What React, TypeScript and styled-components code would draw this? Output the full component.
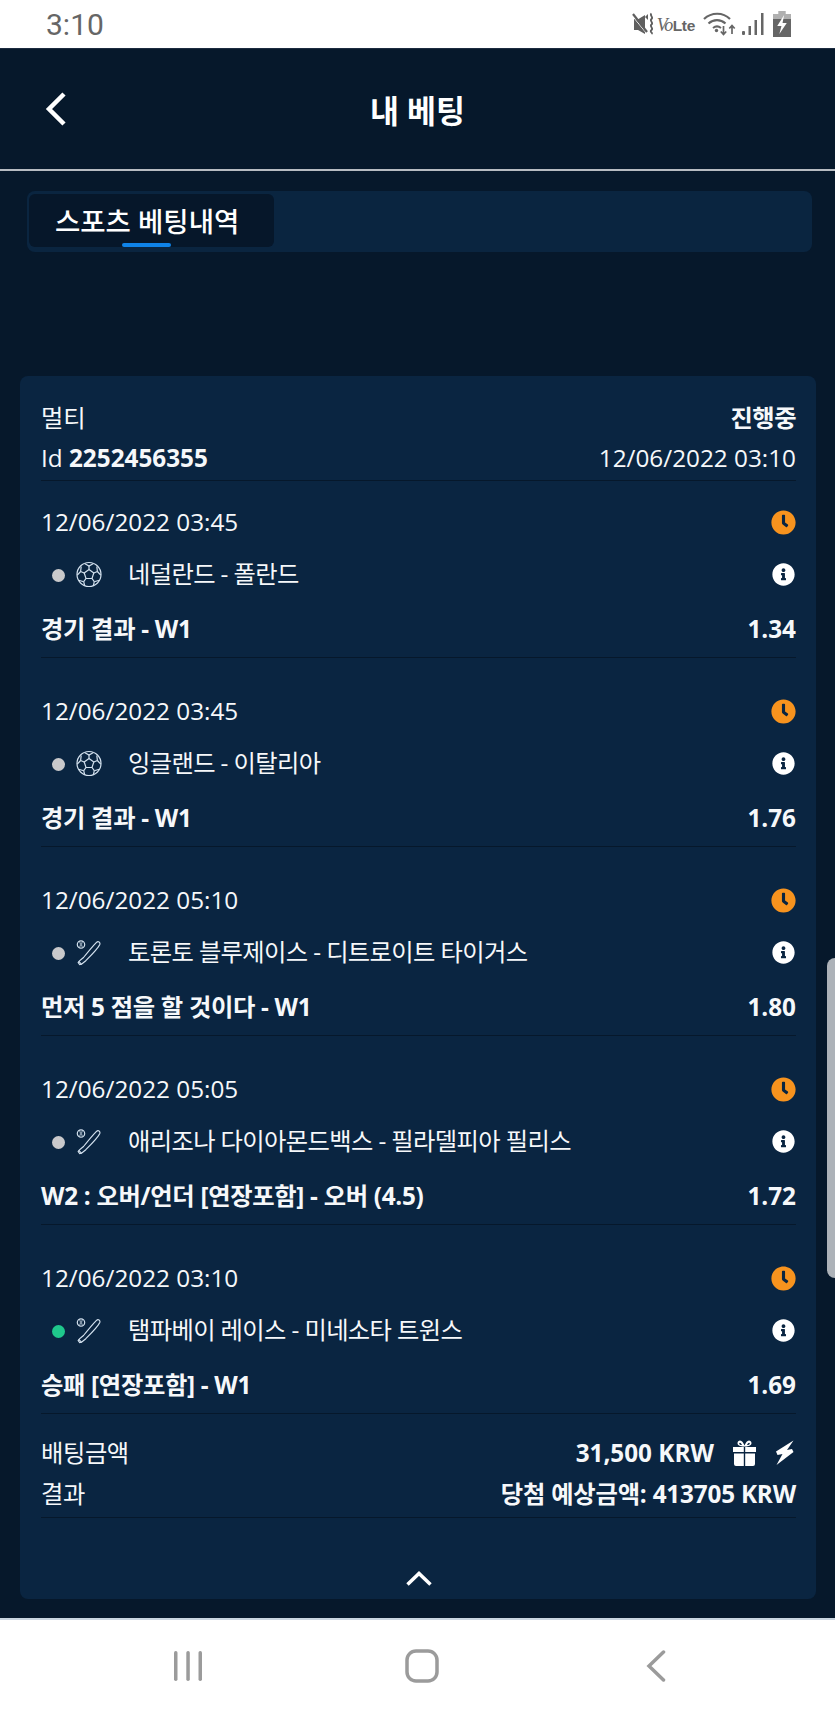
import React from "react";
import styled, { createGlobalStyle } from "styled-components";
import { FaClock, FaInfoCircle } from "react-icons/fa";

const Global = createGlobalStyle`
  html, body { margin: 0; padding: 0; background: #fff; }
  * { box-sizing: border-box; }
`;

const Page = styled.div`
  position: relative;
  width: 835px;
  height: 1716px;
  display: flex;
  flex-direction: column;
  overflow: hidden;
  font-family: "Open Sans", "Noto Sans CJK KR", sans-serif;
  font-size: 24.3px;
  color: #f6f8fa;
`;

const StatusBar = styled.div`
  height: 48px;
  flex: none;
  background: #fff;
  display: flex;
  align-items: center;
  justify-content: space-between;
  padding: 0 44px 0 46px;
  color: #666;
`;

const Clock = styled.span`
  font-family: Roboto, sans-serif;
  font-size: 30px;
`;

const StatusIcons = styled.div`
  display: flex;
  align-items: center;
`;

const Volte = styled.span`
  display: inline-flex;
  align-items: baseline;
  margin: 2px 8px 0 3px;
  color: #666;
  font-family: "Liberation Sans", sans-serif;
  i { font-family: "Liberation Serif", serif; font-size: 18px; font-weight: 400; letter-spacing: -1.5px; margin-right: 1px; }
  b { font-size: 15.5px; font-weight: 700; letter-spacing: -0.3px; }
`;

const Main = styled.div`
  flex: 1;
  display: flex;
  flex-direction: column;
  background: #06182b;
  border-top: 1px solid #1c2b40;
`;

const Header = styled.header`
  height: 122px;
  flex: none;
  border-bottom: 2px solid #b6bbc1;
  display: grid;
  grid-template-columns: 1fr auto 1fr;
  align-items: center;
  padding: 0 45px;
`;

const BackButton = styled.span`
  display: flex;
  align-items: center;
  color: #fff;
`;

const Title = styled.h1`
  margin: 4px 0 0;
  font-size: 31.5px;
  font-weight: 700;
  line-height: 1.2;
  color: #fff;
`;

const TabBar = styled.div`
  flex: none;
  height: 61px;
  margin: 20px 23px 0 27px;
  padding: 3px 2px 5px;
  border-radius: 8px;
  background: #0a2540;
  display: flex;
`;

const Tab = styled.div`
  position: relative;
  width: 245px;
  border-radius: 6px;
  background: #06172a;
  padding-left: 26px;
  display: flex;
  align-items: center;
  font-size: 27.5px;
  font-weight: 500;
  color: #fff;
  padding-bottom: 2px;
  &::after {
    content: "";
    position: absolute;
    left: 93px;
    bottom: 0;
    width: 49px;
    height: 4px;
    border-radius: 2px;
    background: #0f83e8;
  }
`;

const Card = styled.section`
  flex: none;
  width: 796px;
  margin: 124px 0 0 20px;
  padding: 21px 20px 0 21px;
  border-radius: 8px;
  background: #0a2541;
`;

const InfoRow = styled.div<{ $h?: number }>`
  display: flex;
  align-items: baseline;
  justify-content: space-between;
  height: ${(p) => p.$h ?? 41}px;
  line-height: ${(p) => p.$h ?? 41}px;
`;

const Ruled = styled.div`
  padding-bottom: 2px;
  border-bottom: 1px solid #06182b;
`;

const Strong = styled.span`
  font-weight: 700;
`;

const Market = styled.span`
  font-weight: 700;
  letter-spacing: -0.3px;
`;

const StateLabel = styled.span`
  font-weight: 700;
  letter-spacing: -0.5px;
`;

const Leg = styled.div`
  padding-top: 16px;
  border-bottom: 1px solid #06182b;
  & + & { margin-top: 12px; }
`;

const TeamsRow = styled.div`
  display: flex;
  align-items: center;
  height: 54px;
  line-height: 54px;
  padding-left: 11px;
`;

const Dot = styled.span<{ $live?: boolean }>`
  width: 13px;
  height: 13px;
  border-radius: 50%;
  flex: none;
  background: ${(p) => (p.$live ? "#1fc88c" : "#c9c9cb")};
  margin: 2px 11px 0 0;
`;

const SportIcon = styled.svg`
  width: 26px;
  height: 27px;
  flex: none;
  margin-right: 26px;
  fill: none;
  stroke: #d3e1ee;
  stroke-width: 1.2;
`;

const Teams = styled.span`
  flex: 1;
  letter-spacing: -0.62px;
`;

const ClockIcon = styled(FaClock)`
  color: #f7931e;
  width: 25px;
  height: 25px;
  display: block;
  align-self: center;
`;

const InfoIcon = styled(FaInfoCircle)`
  color: #fff;
  width: 23px;
  height: 23px;
  margin-right: 1px;
  display: block;
`;

const Summary = styled.div`
  padding: 18px 0 3px;
  border-bottom: 1px solid #06182b;
`;

const AmountLabel = styled.span`
  letter-spacing: -0.4px;
`;

const Amount = styled.div`
  display: flex;
  align-items: baseline;
  font-weight: 700;
`;

const AmountIcon = styled.svg`
  align-self: center;
  flex: none;
  fill: #fff;
  margin-left: 18px;
`;

const Winnings = styled.span`
  font-weight: 700;
  letter-spacing: -0.2px;
`;

const CardFooter = styled.div`
  height: 81px;
  padding-bottom: 13px;
  display: flex;
  align-items: flex-end;
  justify-content: center;
`;

const BottomStrip = styled.div`
  flex: 1;
  border-bottom: 2px solid #c9d5e0;
`;

const ScrollThumb = styled.div`
  position: absolute;
  top: 958px;
  right: 0;
  width: 8px;
  height: 320px;
  background: #adb2b8;
  border-radius: 8px 0 0 8px;
`;

const NavBar = styled.nav`
  height: 96px;
  flex: none;
  background: #fff;
  display: grid;
  grid-template-columns: repeat(3, 234px);
  justify-items: center;
  align-items: center;
  padding: 0 0 4px 71px;
`;

const MuteIcon = () => (
  <svg width="26" height="24" viewBox="-2 0 26 24">
    <path d="M4 7h4.500L15 3v19L8 18H4z" fill="#5f5f5f" />
    <path d="M2 3.500l15 18.500" stroke="#fff" strokeWidth="1" />
    <path d="M3 2l14 18" stroke="#5f5f5f" strokeWidth="2.200" />
    <path d="M21.500 1.500c-2.500 2 2.500 3.500 0 5.500s2.500 3.500 0 5.500 2.500 3.500 0 5.500 2 2.500 0 4" fill="none" stroke="#5f5f5f" strokeWidth="1.800" />
    <path d="M15 5l3-3v6z" fill="#5f5f5f" />
  </svg>
);

const WifiIcon = () => (
  <svg width="33" height="24" viewBox="0 0 33 24" fill="none" stroke="#666">
    <path d="M1 7c7.500-7 19-7 26 0" strokeWidth="2.200" />
    <path d="M5.500 11.500c5-4.500 12-4.500 17 0" strokeWidth="2.200" />
    <path d="M10 16c2.500-2 5.500-2 8 0" strokeWidth="2" />
    <circle cx="13.500" cy="18.500" r="1.700" fill="#666" stroke="none" />
    <path d="M20.500 14v8M17.800 19.500l2.700 3 2.700-3" strokeWidth="1.700" />
    <path d="M29 22v-8M26.300 16.500l2.700-3 2.700 3" strokeWidth="1.700" />
  </svg>
);

const SignalIcon = () => (
  <svg width="22" height="24" viewBox="0 0 22 24" fill="#666" style={{ marginLeft: 6 }}>
    <rect x="0" y="19" width="3" height="4" rx="1" />
    <rect x="6.500" y="14" width="2.500" height="9" />
    <rect x="12.500" y="8" width="2.500" height="15" />
    <rect x="19" y="1" width="2.500" height="22" />
  </svg>
);

const BatteryIcon = () => (
  <svg width="18" height="26" viewBox="0 0 17 26" preserveAspectRatio="none" style={{ marginLeft: 9 }}>
    <rect x="5" y="0" width="7" height="3" fill="#b0b0b0" />
    <rect x="0" y="3" width="17" height="5" fill="#b0b0b0" />
    <rect x="0" y="8" width="17" height="18" fill="#666" />
    <path d="M10.500 4L4 15h4l-2 8 7-11H9z" fill="#fff" />
  </svg>
);

const SoccerBall = () => (
  <SportIcon viewBox="0 0 26 27">
    <circle cx="13" cy="13.500" r="12" />
    <path d="M13 8.500l4.800 3.500-1.800 5.500h-6L8.200 12z" />
    <path d="M13 8.500V5M17.800 12l3.600-1.500M16 17.500l2.300 3.200M10 17.500l-2.300 3.200M8.200 12L4.600 10.500" />
    <path d="M8.500 2.500L13 5l4.500-2.500M21.400 10.500l-.6-5M21.400 10.500l3.300 3.600M18.300 20.700l5-1.500M18.300 20.700l-1 4.200M7.700 20.700l1 4.200M7.700 20.700l-5-1.500M4.600 10.500l-3.300 3.600M4.600 10.500l.6-5" />
  </SportIcon>
);

const BaseballBat = () => (
  <SportIcon viewBox="0 0 26 27">
    <circle cx="5" cy="5.500" r="3.700" />
    <path d="M3.500 2.500c1.200 2 1.200 4 0 6M6.500 2.500c-1.200 2-1.200 4 0 6" strokeWidth="0.800" />
    <path d="M20.500 3.300c1.600-1.600 4.200-.2 3.300 2.200-1 2.400-9.500 11.700-14 16.200l-4.300 3.600-1.800.4-1.500-2.200 1.300-1.700 4-3.300c4-5 10.500-12.700 13-15.200z" />
    <path d="M2.700 22.300l3 3" />
  </SportIcon>
);

const GiftIcon = () => (
  <AmountIcon width="25" height="26" viewBox="0 0 25 26">
    <path d="M1 7h10.800v5H1zM13.200 7H24v5H13.200zM2 13.500h9.800V26H4a2 2 0 0 1-2-2zM13.200 13.500H23V24a2 2 0 0 1-2 2h-7.800z" />
    <path d="M11.500 6.500C9 6.500 5.500 5.800 5.500 3.300 5.500 1.500 6.800.5 8 .5c2 0 3.500 2.500 4.500 5 1-2.500 2.500-5 4.500-5 1.200 0 2.500 1 2.500 2.800 0 2.500-3.500 3.200-6 3.200h-2zM10 5C9.200 3.600 8.500 2.700 8 2.700c-.5 0-.8.300-.8.700C7.200 4.400 8.600 5 10 5zm5 0c1.400 0 2.800-.6 2.800-1.600 0-.4-.3-.7-.8-.7-.5 0-1.200.9-2 2.300z" fillRule="evenodd" />
  </AmountIcon>
);

const BoltIcon = () => (
  <AmountIcon width="19" height="26" viewBox="0 0 19 26" style={{ marginRight: 2 }}>
    <path d="M18.500.5L1 11.500l1.500 3.500 5-1L1.500 25 18.500 12l-1.500-3-5 1z" />
  </AmountIcon>
);

const legs = [
  { date: "12/06/2022 03:45", sport: "soccer", teams: "네덜란드 - 폴란드", market: "경기 결과 - W1", odds: "1.34" },
  { date: "12/06/2022 03:45", sport: "soccer", teams: "잉글랜드 - 이탈리아", market: "경기 결과 - W1", odds: "1.76" },
  { date: "12/06/2022 05:10", sport: "baseball", teams: "토론토 블루제이스 - 디트로이트 타이거스", market: "먼저 5 점을 할 것이다 - W1", odds: "1.80" },
  { date: "12/06/2022 05:05", sport: "baseball", teams: "애리조나 다이아몬드백스 - 필라델피아 필리스", market: "W2 : 오버/언더 [연장포함] - 오버 (4.5)", odds: "1.72" },
  { date: "12/06/2022 03:10", sport: "baseball", teams: "탬파베이 레이스 - 미네소타 트윈스", market: "승패 [연장포함] - W1", odds: "1.69", live: true },
];

export default function App() {
  return (
    <Page>
      <Global />
      <StatusBar>
        <Clock>3:10</Clock>
        <StatusIcons>
          <MuteIcon />
          <Volte>
            <i>Vo</i>
            <b>Lte</b>
          </Volte>
          <WifiIcon />
          <SignalIcon />
          <BatteryIcon />
        </StatusIcons>
      </StatusBar>
      <Main>
        <Header>
          <BackButton>
            <svg width="22" height="34" viewBox="0 0 22 34" fill="none" stroke="currentColor" strokeWidth="4.500">
              <path d="M19 2L4 17l15 15" />
            </svg>
          </BackButton>
          <Title>내 베팅</Title>
        </Header>
        <TabBar>
          <Tab>스포츠 베팅내역</Tab>
        </TabBar>
        <Card>
          <Ruled>
            <InfoRow>
              <span>멀티</span>
              <StateLabel>진행중</StateLabel>
            </InfoRow>
            <InfoRow $h={40}>
              <span>
                Id <Strong>2252456355</Strong>
              </span>
              <span>12/06/2022 03:10</span>
            </InfoRow>
          </Ruled>
          {legs.map((leg, i) => (
            <Leg key={i}>
              <InfoRow $h={50}>
                <span>{leg.date}</span>
                <ClockIcon />
              </InfoRow>
              <TeamsRow>
                <Dot $live={leg.live} />
                {leg.sport === "soccer" ? <SoccerBall /> : <BaseballBat />}
                <Teams>{leg.teams}</Teams>
                <InfoIcon />
              </TeamsRow>
              <InfoRow $h={56}>
                <Market>{leg.market}</Market>
                <Strong>{leg.odds}</Strong>
              </InfoRow>
            </Leg>
          ))}
          <Summary>
            <InfoRow $h={42}>
              <AmountLabel>배팅금액</AmountLabel>
              <Amount>
                31,500 KRW
                <GiftIcon />
                <BoltIcon />
              </Amount>
            </InfoRow>
            <InfoRow $h={40}>
              <AmountLabel>결과</AmountLabel>
              <Winnings>당첨 예상금액: 413705 KRW</Winnings>
            </InfoRow>
          </Summary>
          <CardFooter>
            <svg width="26" height="16" viewBox="0 0 26 16" fill="none" stroke="#fff" strokeWidth="3.500">
              <path d="M1.500 14.500L13 3.500l11.500 11" />
            </svg>
          </CardFooter>
        </Card>
        <BottomStrip />
      </Main>
      <NavBar>
        <svg width="30" height="30" viewBox="0 0 30 30" fill="#9b9b9b">
          <rect x="1" y="0" width="3.500" height="30" rx="1.700" />
          <rect x="13.300" y="0" width="3.500" height="30" rx="1.700" />
          <rect x="25.500" y="0" width="3.500" height="30" rx="1.700" />
        </svg>
        <svg width="34" height="34" viewBox="0 0 34 34" fill="none" stroke="#9b9b9b" strokeWidth="3.500">
          <rect x="2" y="2" width="30" height="30" rx="9" />
        </svg>
        <svg width="20" height="32" viewBox="0 0 20 32" fill="none" stroke="#9b9b9b" strokeWidth="3.500" strokeLinecap="round">
          <path d="M17.500 2L3 16l14.500 14" />
        </svg>
      </NavBar>
      <ScrollThumb />
    </Page>
  );
}
